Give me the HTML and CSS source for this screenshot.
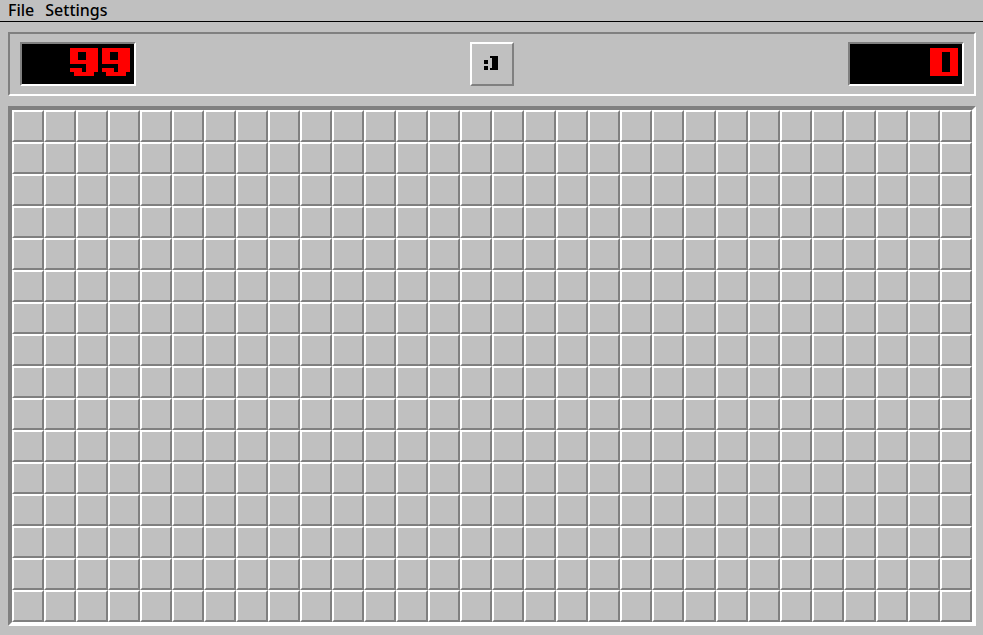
FILE: index.html
```html
<!DOCTYPE html>
<html lang="en">
<head>
<meta charset="utf-8">
<title>Minesweeper</title>
<link rel="stylesheet" href="styles.css">
</head>
<body>
<nav class="menubar">
  <span class="menu-item">File</span>
  <span class="menu-item">Settings</span>
</nav>
<main class="game">
  <header class="panel">
    <div class="counter">
      <div class="digit nine" aria-hidden="true"><i class="a"></i><i class="b"></i><i class="c"></i><i class="d"></i><i class="e"></i><i class="f"></i><i class="g"></i></div>
      <div class="digit nine" aria-hidden="true"><i class="a"></i><i class="b"></i><i class="c"></i><i class="d"></i><i class="e"></i><i class="f"></i><i class="g"></i></div>
      <span class="reading">99</span>
    </div>
    <button class="face" type="button" aria-label="New game">
      <svg class="face-icon" width="14" height="14" viewBox="0 0 14 14" aria-hidden="true">
        <rect x="0" y="4" width="4" height="4"/>
        <rect x="0" y="10" width="4" height="4"/>
        <rect x="8" y="0" width="6" height="14"/>
        <rect x="6" y="0" width="2" height="2"/>
        <rect x="6" y="12" width="2" height="2"/>
      </svg>
    </button>
    <div class="counter">
      <div class="digit zero" aria-hidden="true"><i class="a"></i><i class="b"></i><i class="c"></i><i class="d"></i></div>
      <span class="reading">0</span>
    </div>
  </header>
  <section class="board" id="board"></section>
</main>
<script src="game.js"></script>
</body>
</html>
```
FILE: styles.css
```css
* { box-sizing: border-box; }
html, body { margin: 0; height: 100%; }
body {
  background: #c0c0c0;
  color: #000;
  font-family: "Noto Sans", sans-serif;
  font-size: 16px;
  overflow: hidden;
}
.menubar {
  display: flex;
  gap: 11px;
  height: 22px;
  padding: 0 8px;
  border-bottom: 1px solid #000;
  line-height: 21px;
  font-weight: 500;
}
.game {
  display: flex;
  flex-direction: column;
  gap: 10px;
  padding: 10px 7px 0 8px;
}
.panel {
  display: flex;
  align-items: center;
  justify-content: space-between;
  height: 64px;
  padding: 0 10px;
  border: 2px solid;
  border-color: #808080 #fff #fff #808080;
}
.counter {
  position: relative;
  display: flex;
  justify-content: flex-end;
  align-items: flex-start;
  gap: 4px;
  width: 116px;
  height: 44px;
  padding: 4px 4px 0 0;
  background: #000;
  border: 2px solid;
  border-color: #808080 #fff #fff #808080;
}
.reading {
  position: absolute;
  top: 4px;
  right: 4px;
  font: bold 28px/28px "Liberation Mono", monospace;
  letter-spacing: 15.2px;
  color: transparent;
}
.digit {
  display: grid;
  grid-template-columns: repeat(7, 4px);
  grid-template-rows: repeat(7, 4px);
}
.digit i { background: #f00; }
.nine .a { grid-area: 1 / 1 / 2 / 8; }
.nine .b { grid-area: 2 / 1 / 4 / 3; }
.nine .c { grid-area: 2 / 5 / 4 / 8; }
.nine .d { grid-area: 4 / 1 / 5 / 8; }
.nine .e { grid-area: 5 / 5 / 7 / 8; }
.nine .f { grid-area: 6 / 1 / 7 / 4; }
.nine .g { grid-area: 7 / 2 / 8 / 7; }
.zero .a { grid-area: 1 / 1 / 2 / 8; }
.zero .b { grid-area: 2 / 1 / 7 / 4; }
.zero .c { grid-area: 2 / 6 / 7 / 8; }
.zero .d { grid-area: 7 / 1 / 8 / 8; }
.face {
  display: flex;
  align-items: center;
  justify-content: center;
  width: 44px;
  height: 44px;
  padding: 0 2px 2px 0;
  background: #c0c0c0;
  border: 2px solid;
  border-color: #fff #808080 #808080 #fff;
}
.face-icon { fill: #000; }
.board {
  display: grid;
  grid-template-columns: repeat(30, 32px);
  grid-auto-rows: 32px;
  width: 968px;
  height: 520px;
  border: 4px solid;
  border-color: #808080 #fff #fff #808080;
}
.cell {
  background: #c0c0c0;
  border: 2px solid;
  border-color: #fff #808080 #808080 #fff;
}
```
FILE: game.js
```js
const board = document.getElementById('board');
for (let i = 0; i < 30 * 16; i++) {
  const cell = document.createElement('div');
  cell.className = 'cell';
  board.appendChild(cell);
}
```
